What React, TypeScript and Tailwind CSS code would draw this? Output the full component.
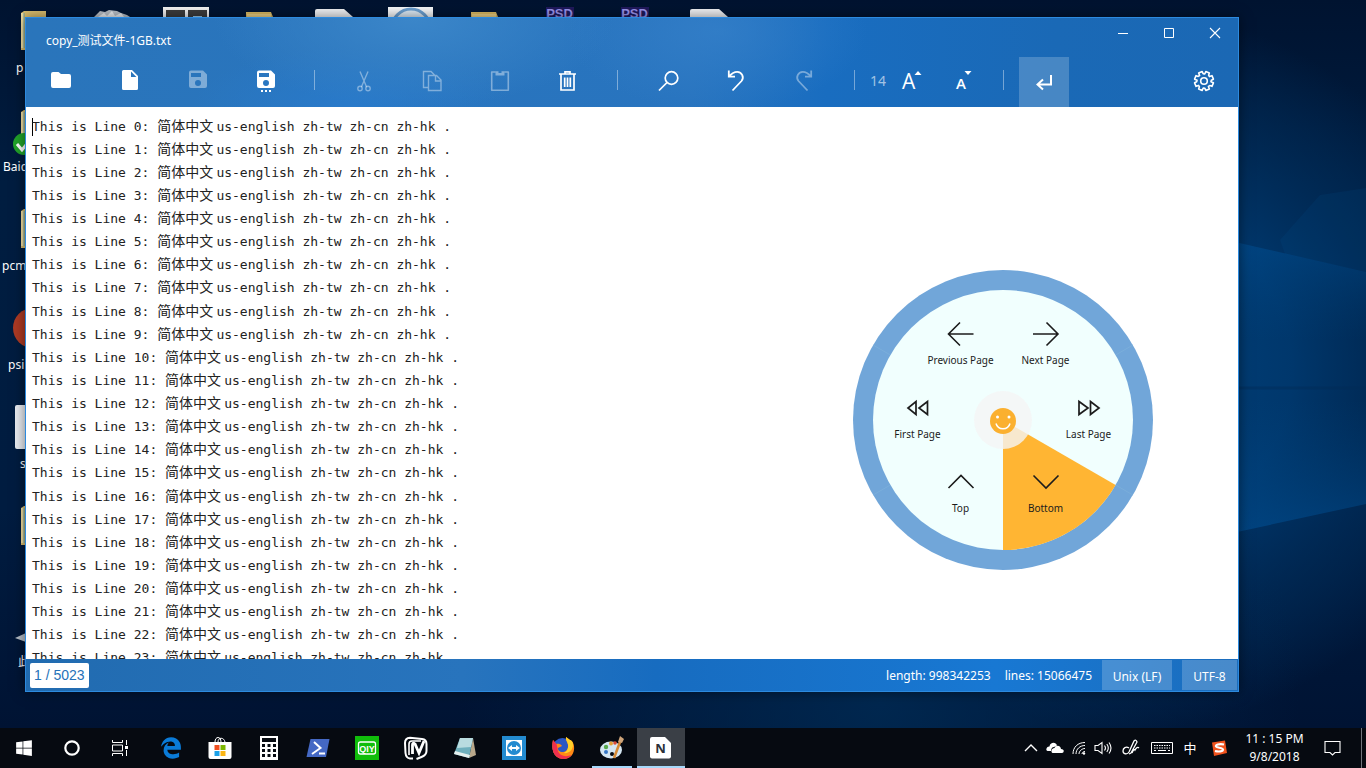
import React from "react";
import { FaWindows } from "react-icons/fa";
import { FaEdgeLegacy } from "react-icons/fa6";

type IconProps = { children: React.ReactNode; size?: string; box?: string };

function Glyph({ children, size = "size-6", box = "0 0 24 24" }: IconProps) {
  return (
    <svg className={`overflow-visible ${size}`} viewBox={box} fill="none" stroke="currentColor" strokeWidth="1.4" aria-hidden="true">
      {children}
    </svg>
  );
}

const GEAR_PATH = (() => {
  const points: string[] = [];
  const teeth = 8;
  for (let i = 0; i < teeth; i++) {
    const steps: [number, number][] = [
      [-0.2, 9.6],
      [0.2, 9.6],
      [0.28, 7.4],
      [0.5, 7],
    ];
    for (const [offset, radius] of steps) {
      const angle = (i * Math.PI * 2) / teeth - Math.PI / 2 + Math.PI / 8 + offset;
      points.push(`${(12 + Math.cos(angle) * radius).toFixed(2)} ${(11 + Math.sin(angle) * radius).toFixed(2)}`);
    }
  }
  return `M${points.join("L")}Z`;
})();

function ToolButton({ label, disabled, active, children }: { label: string; disabled?: boolean; active?: boolean; children: React.ReactNode }) {
  const state = active ? "bg-white/20 text-white" : disabled ? "text-white/40" : "text-white";
  return (
    <button type="button" aria-label={label} disabled={disabled} className={`flex h-[50px] w-[50px] shrink-0 items-center justify-center ${state}`}>
      {children}
    </button>
  );
}

function Divider({ space }: { space: string }) {
  return <span className={`mb-1 h-5 w-px shrink-0 bg-white/40 ${space}`} />;
}

function SaveShape() {
  return (
    <path
      fill="currentColor"
      stroke="none"
      fillRule="evenodd"
      d="M6 0.5h12l4 4V16a2 2 0 0 1-2 2H6a2 2 0 0 1-2-2V2.500a2 2 0 0 1 2-2ZM6 3v4h10V3ZM13 10a3 3 0 1 0 0 6 3 3 0 0 0 0-6Z"
    />
  );
}

function Toolbar() {
  return (
    <div className="flex h-[50px] items-center pl-[10px] pr-[9px]">
      <div className="flex gap-[18px]">
        <ToolButton label="Open">
          <Glyph><path fill="currentColor" stroke="none" d="M4 2h5.500l2.500 2h8a2 2 0 0 1 2 2v10a2 2 0 0 1-2 2H4a2 2 0 0 1-2-2V4a2 2 0 0 1 2-2Z" /></Glyph>
        </ToolButton>
        <ToolButton label="New">
          <Glyph><path fill="currentColor" stroke="none" fillRule="evenodd" d="M6.500 0H15l6 6v12.500a1.500 1.500 0 0 1-1.500 1.500h-13A1.500 1.500 0 0 1 5 18.500v-17A1.500 1.500 0 0 1 6.500 0ZM14 1.600V7h5.400Z" /></Glyph>
        </ToolButton>
        <ToolButton label="Save" disabled><Glyph><SaveShape /></Glyph></ToolButton>
        <ToolButton label="Save as">
          <Glyph>
            <SaveShape />
            <path fill="currentColor" stroke="none" d="M8 20h2v2H8ZM12 20h2v2h-2ZM16 20h2v2h-2Z" />
          </Glyph>
        </ToolButton>
      </div>
      <Divider space="mx-6" />
      <div className="flex gap-[18px]">
        <ToolButton label="Cut" disabled>
          <Glyph>
            <path d="M8 1.500 14.600 17M16 1.500 9.400 17" />
            <circle cx="8" cy="18.500" r="2.200" />
            <circle cx="16" cy="18.500" r="2.200" />
          </Glyph>
        </ToolButton>
        <ToolButton label="Copy" disabled>
          <Glyph>
            <path d="M8.500 17.500H3.500V1.500H11L14.500 5M8.500 5.500h8l4.500 4.500V20.500H8.500ZM15.500 5.700V11H21" />
          </Glyph>
        </ToolButton>
        <ToolButton label="Paste" disabled>
          <Glyph>
            <path strokeWidth="1.600" strokeLinejoin="round" d="M7.500 2H3.700V20.300H20.300V2H16.500" />
            <path fill="currentColor" stroke="none" d="M7.500 1.300H10.500V3h3V1.300h3V5.500h-9Z" />
          </Glyph>
        </ToolButton>
        <ToolButton label="Delete">
          <Glyph>
            <path strokeWidth="1.700" d="M3 4H20M5 4V20H18V4M9 3.500V1.800h5V3.500M8.700 7.500v9.500M11.500 7.500v9.500M14.300 7.500v9.500" />
          </Glyph>
        </ToolButton>
      </div>
      <Divider space="ml-6 mr-[25px]" />
      <div className="flex gap-[18px]">
        <ToolButton label="Find">
          <Glyph><g strokeWidth="1.700"><circle cx="15.500" cy="8" r="6.300" /><path d="M11 12.500 3 20.500" /></g></Glyph>
        </ToolButton>
        <ToolButton label="Undo">
          <Glyph><path strokeWidth="1.800" d="M4.800 0.500V6.700H11M5 6.500C8 3 10 1.800 13.200 1.800C18 1.800 20.500 7.500 17.500 11L8.500 20.500" /></Glyph>
        </ToolButton>
        <ToolButton label="Redo" disabled>
          <Glyph><path strokeWidth="1.800" d="M19.200 0.500V6.700H13M19 6.500C16 3 14 1.800 10.800 1.800C6 1.800 3.500 7.500 6.500 11L15.500 20.500" /></Glyph>
        </ToolButton>
      </div>
      <Divider space="ml-[25px] mr-[15px]" />
      <span className="mb-[3px] w-[18px] text-[14px] leading-5 text-white/60">14</span>
      <ToolButton label="Increase font size">
        <Glyph>
          <text x="1" y="19" fontSize="21" fontFamily="Open Sans, sans-serif" fill="currentColor" stroke="none">A</text>
          <path fill="currentColor" stroke="none" d="M13.500 5 17 1l3.500 4Z" />
        </Glyph>
      </ToolButton>
      <ToolButton label="Decrease font size">
        <Glyph>
          <text x="5" y="19" fontSize="15" fontFamily="Open Sans, sans-serif" fontWeight="600" fill="currentColor" stroke="none">A</text>
          <path fill="currentColor" stroke="none" d="M13.500 1 17 5l3.500-4Z" />
        </Glyph>
      </ToolButton>
      <Divider space="mx-[15px]" />
      <ToolButton label="Word wrap" active>
        <Glyph><path strokeWidth="2" d="M19 5V14.500H6M11 9.500 5.500 14.500 11 19.500" /></Glyph>
      </ToolButton>
      <div className="ml-auto">
        <ToolButton label="Settings">
          <Glyph><g strokeWidth="1.600"><path strokeLinejoin="round" d={GEAR_PATH} /><circle cx="12" cy="11" r="3.300" /></g></Glyph>
        </ToolButton>
      </div>
    </div>
  );
}

function TitleBar() {
  return (
    <div className="flex h-[39px] justify-between">
      <h1 className="self-end pl-5 text-[12px] leading-8 text-white">copy_测试文件-1GB.txt</h1>
      <div className="flex text-white">
        <button type="button" aria-label="Minimize" className="flex h-[30px] w-[46px] items-center justify-center">
          <Glyph size="size-3" box="0 0 12 12"><path strokeWidth="1" d="M1 6.500H11" /></Glyph>
        </button>
        <button type="button" aria-label="Maximize" className="flex h-[30px] w-[46px] items-center justify-center">
          <Glyph size="size-3" box="0 0 12 12"><path strokeWidth="1" d="M1.500 1.500h9v9h-9Z" /></Glyph>
        </button>
        <button type="button" aria-label="Close" className="flex h-[30px] w-[46px] items-center justify-center">
          <Glyph size="size-3" box="0 0 12 12"><path strokeWidth="1.100" d="m1 1 10 10M11 1 1 11" /></Glyph>
        </button>
      </div>
    </div>
  );
}

function WheelItem({ label, children }: { label: string; children: React.ReactNode }) {
  return (
    <button type="button" className="flex h-12 w-[85px] flex-col items-center gap-1 text-[10px] leading-4 whitespace-nowrap text-[#1c1c1c]">
      <Glyph size="size-7" box="0 0 28 28">{children}</Glyph>
      {label}
    </button>
  );
}

function Wheel() {
  return (
    <nav aria-label="Page navigation" className="absolute top-[163px] right-[85px] size-[300px]">
      <svg className="absolute inset-0 size-full" viewBox="0 0 300 300" aria-hidden="true">
        <circle cx="150" cy="150" r="150" fill="#71a6d9" />
        <path d="M20.100 75 37.400 85M279.900 75 262.600 85M20.100 225 37.400 215M279.900 225 262.600 215" stroke="#7aaedb" strokeWidth="1" />
        <circle cx="150" cy="150" r="130" fill="#f1fffe" />
        <path d="M150 150 262.600 215A130 130 0 0 1 150 280Z" fill="#ffb533" />
        <circle cx="150" cy="150" r="29" fill="#f5f5f5" fillOpacity="0.800" />
        <circle cx="150" cy="151" r="13" fill="#fbb02f" />
        <circle cx="144.500" cy="147" r="1.500" fill="#fff" />
        <circle cx="156" cy="147" r="1.500" fill="#fff" />
        <path d="M143 153.500c2 7 12 7 14 0" fill="none" stroke="#fff" strokeWidth="1.500" />
      </svg>
      <div className="relative flex flex-col gap-[26px] pt-[50px]">
        <div className="flex justify-center">
          <WheelItem label="Previous Page"><path strokeWidth="1.600" d="M26.500 14H1.500M13 2.500 1.500 14 13 25.500" /></WheelItem>
          <WheelItem label="Next Page"><path strokeWidth="1.600" d="M1 14H26M14.500 2.500 26 14 14.500 25.500" /></WheelItem>
        </div>
        <div className="flex justify-between px-[22px]">
          <WheelItem label="First Page"><path strokeWidth="1.700" d="M12 7.500V20.500L4 14ZM23.500 7.500V20.500L15 14Z" /></WheelItem>
          <WheelItem label="Last Page"><path strokeWidth="1.700" d="M15.500 7.500V20.500L24 14ZM4 7.500V20.500L13 14Z" /></WheelItem>
        </div>
        <div className="flex justify-center">
          <WheelItem label="Top"><path strokeWidth="1.600" d="M1.500 20 14 7.500 26.500 20" /></WheelItem>
          <WheelItem label="Bottom"><path strokeWidth="1.600" d="M1.500 7.500 14 20 26.500 7.500" /></WheelItem>
        </div>
      </div>
    </nav>
  );
}

const LINES = Array.from({ length: 24 }, (_, i) => i);

function EditorWindow() {
  return (
    <section className="absolute top-[17px] right-[127px] bottom-[36px] left-[25px] flex flex-col border border-[#2d8ade] bg-[#2672bb] shadow-[0_0_12px_rgba(0,0,0,0.5)]">
      <header className="bg-[radial-gradient(ellipse_200px_90px_at_32%_0%,#3b86c9,transparent),radial-gradient(ellipse_150px_80px_at_57%_15%,rgba(54,129,202,0.7),transparent),radial-gradient(ellipse_160px_60px_at_27%_100%,#297aca,transparent),linear-gradient(90deg,#2a75bb_0%,#2874bf_55%,#196dc0_66%,#1a69b6_85%,#1b68b4_100%)]">
        <TitleBar />
        <Toolbar />
      </header>
      <main className="relative flex min-h-0 flex-1 overflow-hidden bg-white">
        <ol className="-mb-[11px] grid flex-1 auto-rows-fr pt-2 pl-[6px] font-['DejaVu_Sans_Mono','Noto_Sans_CJK_SC',monospace] text-[13px] text-[#222]">
          {LINES.map((n) => (
            <li key={n} className="flex min-h-0 items-center whitespace-pre">
              {n === 0 && <span className="-mr-px h-[18px] w-px bg-black" />}
              <span className="leading-[22px]">
                {`This is Line ${n}: `}
                <span className="font-['Noto_Sans_CJK_SC',sans-serif] text-[14px] leading-none">简体中文 </span>
                us-english zh-tw zh-cn zh-hk .
              </span>
            </li>
          ))}
        </ol>
        <Wheel />
      </main>
      <footer className="flex h-8 items-center bg-[linear-gradient(90deg,#216bb0_0%,#2874bd_36%,#176cc0_52%,#1878d3_80%,#1b6dbd_100%)] text-[12px] text-white">
        <button type="button" className="ml-1 h-[25px] rounded-xs bg-white px-1 font-['Liberation_Sans',sans-serif] text-[14px] leading-[25px] text-[#2672b8]">1 / 5023</button>
        <div className="ml-auto flex items-center leading-[30px]">
          <span className="mr-[14px] pt-[2px]">length: 998342253</span>
          <span className="mr-[10px] pt-[2px]">lines: 15066475</span>
          <button type="button" className="mr-[10px] h-[30px] w-[70px] bg-white/20 pt-[2px]">Unix (LF)</button>
          <button type="button" className="mr-px h-[30px] w-[55px] bg-white/20 pt-[2px]">UTF-8</button>
        </div>
      </footer>
    </section>
  );
}

function FolderArt() {
  return (
    <>
      <path d="M21 3 24 1H46V40H21Z" fill="#d9bd6d" />
      <path d="M21 3h3v35h-3Z" fill="#f3df9d" />
      <path d="M24 3v35" stroke="#6f9fa0" />
    </>
  );
}

const COLUMN: { label: string; art: React.ReactNode }[] = [
  { label: "p", art: <FolderArt /> },
  { label: "Baid", art: <><FolderArt /><circle cx="24" cy="35" r="11" fill="#21a329" /><path d="m17 35 5 6 8-10" stroke="#fff" strokeWidth="3" fill="none" /></> },
  { label: "pcm", art: <FolderArt /> },
  { label: "psi", art: <circle cx="33" cy="21" r="20" fill="#ad3a24" /> },
  { label: "s", art: <rect x="15" y="-1" width="30" height="44" rx="2" fill="#e9ecf1" /> },
  { label: "", art: <FolderArt /> },
  { label: "此", art: <path d="M15 34 26 29v9Z" fill="#b4bdc6" /> },
];

const LABEL_INDENT = ["pl-4", "pl-[3px]", "pl-[2px]", "pl-2", "pl-5", "pl-4", "pl-[18px]"];

function PsdTile() {
  return <span className="mt-[7px] w-7 bg-[#20195c] text-center font-['Liberation_Sans',sans-serif] text-[13px] leading-[14px] font-bold text-[#9a93ea]">PSD</span>;
}

function Cap({ children }: { children: React.ReactNode }) {
  return <svg className="h-[17px] w-12" viewBox="0 0 48 17" aria-hidden="true">{children}</svg>;
}

const capFolder = <Cap><path d="M10 12h25l2 5H10Z" fill="#d9b860" /><path d="M11 14h24v3H11Z" fill="#ecd083" /></Cap>;
const capDoc = <Cap><path d="M4 17V11q0-2 2-2H33l9 8Z" fill="#eef0f3" /></Cap>;

function DesktopIcons() {
  return (
    <div className="absolute inset-0 overflow-hidden text-[12px] text-white">
      <ul className="absolute top-[10px] left-0 w-12">
        {COLUMN.map((item, i) => (
          <li key={i} className="h-[99px]">
            <svg className="h-[50px] w-12 overflow-visible" viewBox="0 0 48 50" aria-hidden="true">{item.art}</svg>
            <span className={`block leading-4 ${LABEL_INDENT[i]}`}>{item.label}</span>
          </li>
        ))}
      </ul>
      <ul className="absolute top-0 left-[72px] flex h-[17px]">
        {[
          <Cap><path d="m8 17 6-6 5 1 4-2 8 1 4 2 6 2 3 2Z" fill="#b9bfc6" /><path d="m12 17 6-4 3 3 5-5 3 5 6-3 3 4Z" fill="#eceff2" /></Cap>,
          <Cap><path d="M2 7h48v10H2Z" fill="#f1f1f1" /><path d="M5 10h19v7H5ZM27 10h19v7H27Z" fill="#3c3c3c" /><path d="M32 16h9v1h-9Z" fill="#9ecbe8" /></Cap>,
          capFolder,
          capDoc,
          <Cap><path d="M2 7h45v10H2Z" fill="#f4f6f8" /><circle cx="25" cy="28" r="19" fill="#dce9f4" stroke="#6b9fd0" strokeWidth="3" /></Cap>,
          capFolder,
          <PsdTile />,
          <PsdTile />,
          capDoc,
        ].map((art, i) => (
          <li key={i} className="flex w-[75px] items-start justify-center">{art}</li>
        ))}
      </ul>
    </div>
  );
}

function TaskButton({ label, children, className = "" }: { label: string; children: React.ReactNode; className?: string }) {
  return <button type="button" aria-label={label} className={`flex h-10 w-12 shrink-0 items-center justify-center ${className}`}>{children}</button>;
}

function AppArt({ children }: { children: React.ReactNode }) {
  return <svg className="size-6" viewBox="0 0 24 24" fill="none" aria-hidden="true">{children}</svg>;
}

function Taskbar() {
  return (
    <footer className="flex h-10 shrink-0 bg-[#060a11] text-[12px] text-white">
      <TaskButton label="Start"><FaWindows className="size-[18px]" /></TaskButton>
      <TaskButton label="Search"><AppArt><circle cx="12" cy="12" r="6.700" stroke="#fff" strokeWidth="2.200" /></AppArt></TaskButton>
      <TaskButton label="Task view">
        <AppArt><path d="M4.500 4v2.500h10V4M4.500 20v-2.500h10V20M4.500 9h10v6h-10ZM18.500 4v5M18.500 14v6" stroke="#fff" /><path d="M17 10h3v3h-3Z" fill="#fff" /></AppArt>
      </TaskButton>
      <div className="ml-[3px] flex gap-px">
        <TaskButton label="Microsoft Edge"><FaEdgeLegacy className="size-[22px] text-[#0a7bd8]" /></TaskButton>
        <TaskButton label="Store">
          <AppArt>
            <path d="M7 6c0-6 6-6 6 0M10 6c0-5 6-5 7 0" stroke="#fff" />
            <path d="M.5 6h23v15q0 2-2 2h-19q-2 0-2-2Z" fill="#fff" />
            <path d="M6.500 9h5v5h-5Z" fill="#f04e1f" /><path d="M12.500 9h5v5h-5Z" fill="#7db700" /><path d="M6.500 15h5v5h-5Z" fill="#1ca1e8" /><path d="M12.500 15h5v5h-5Z" fill="#fcb614" />
          </AppArt>
        </TaskButton>
        <TaskButton label="Calculator">
          <AppArt>
            <path d="M3 0h18v24H3Z" fill="#fff" />
            <path d="M5 2h14v4H5Z" fill="#060a11" />
            <path d="M5 9.500h14M5 14.500h14M5 19.500h14" stroke="#060a11" strokeWidth="3" strokeDasharray="3 2.500" />
          </AppArt>
        </TaskButton>
        <TaskButton label="PowerShell">
          <AppArt><path d="M4.500 3h19L20 21H.5Z" fill="#4468c4" /><path d="m8 6 6.500 6L6 18M13 17.500h6" stroke="#fff" strokeWidth="2" /></AppArt>
        </TaskButton>
        <TaskButton label="iQIYI">
          <AppArt>
            <path d="M0 0h24v24H0Z" fill="#10bd0b" />
            <rect x="3.500" y="6" width="17" height="12" rx="2" stroke="#fff" strokeWidth="1.300" />
            <text x="12" y="15.500" fontSize="9" fontWeight="700" textAnchor="middle" fontFamily="Liberation Sans, sans-serif" fill="#fff">QIY</text>
          </AppArt>
        </TaskButton>
        <TaskButton label="MTV">
          <AppArt>
            <path d="M9 22.500H6Q2 22 1.500 17L1 7Q1 2 6 1.700L18 3q4.500.5 4.500 5v7q0 4-5 6l-5 2" stroke="#fff" strokeWidth="2" />
            <path d="M8.500 18V9q0-3 2.500-1l4 9 5-12" stroke="#fff" strokeWidth="2.800" /><path d="M5 19V8q0-3 3-3h9" stroke="#fff" strokeWidth="1.600" />
          </AppArt>
        </TaskButton>
        <TaskButton label="Notepad">
          <AppArt><path d="m20 2 3 17-7 3Z" fill="#b8a78a" /><path d="M7 2h13l-4 20L1 18Z" fill="#6fb0bd" /><path d="M7 2h13l-2 9L4 12Z" fill="#b9dce0" /><path d="m1 18 15 4 1-3L2 15Z" fill="#e6f0ee" /></AppArt>
        </TaskButton>
        <TaskButton label="TeamViewer">
          <AppArt><path d="M0 0h24v24H0Z" fill="#238bd0" /><path d="M4 4h16v16H4Z" fill="#fff" /><circle cx="12" cy="12" r="7" fill="#238bd0" /><path d="M6 12l4-3v2h4V9l4 3-4 3v-2h-4v2Z" fill="#fff" /></AppArt>
        </TaskButton>
        <TaskButton label="Firefox">
          <AppArt>
            <circle cx="11.500" cy="12" r="10" fill="#2a57c5" />
            <path d="M2 4c-2 8 0 18 9.500 19C19 23.500 24 18 23 10c-.5-4-3-6-4-6L15 1c-.5 3 1 4 1.500 6 2 5-1 9-4.500 9-4 0-5-2-5-4l4-2C9 7 6 8 5 8Z" fill="#ff8a16" />
            <path d="M2 4c-2 8 0 18 9.500 19 4 .2 7-1 9-4-7 3-14 0-14-7l-1-4Z" fill="#ef2f4e" />
            <path d="M15 1c-.5 3 1 4 1.500 6 2 5-1 9-4 10 6 1 10-4 9.500-9-.5-3-2-4-3-4Z" fill="#ffd02a" />
          </AppArt>
        </TaskButton>
        <TaskButton label="Paint" className="relative">
          <AppArt>
            <ellipse cx="11" cy="14" rx="11" ry="8.500" fill="#d5e7f2" />
            <circle cx="6" cy="11" r="2.200" fill="#58a94d" /><circle cx="11" cy="7.500" r="2" fill="#e2a136" /><circle cx="15" cy="7" r="1.800" fill="#d94b36" />
            <circle cx="6" cy="16" r="2" fill="#3776c5" /><circle cx="12" cy="18" r="2" fill="#060a11" />
            <path d="M14 22 20 6" stroke="#d68a35" strokeWidth="2.500" /><path d="m18 6 2-6 4 3-2 4Z" fill="#cfa57a" />
          </AppArt>
          <span className="absolute bottom-0 left-1 h-[2px] w-10 bg-[#a6d8fa]" />
        </TaskButton>
        <TaskButton label="Notepads" className="relative bg-[#3a3f46]">
          <AppArt>
            <path d="M3 1h13l6 6v13.500q0 2-2 2H3q-2 0-2-2V3q0-2 2-2Z" fill="#fff" />
            <text x="11.500" y="17" fontSize="13" fontWeight="700" textAnchor="middle" fontFamily="Open Sans, sans-serif" fill="#2b3038">N</text>
          </AppArt>
          <span className="absolute bottom-0 left-0 h-[2px] w-full bg-[#a6d8fa]" />
        </TaskButton>
      </div>
      <div className="ml-auto flex items-center">
        <button type="button" aria-label="Show hidden icons" className="w-5"><Glyph size="mx-auto size-5" box="0 0 20 20"><path d="m4 13 6-6 6 6" /></Glyph></button>
        <button type="button" aria-label="OneDrive" className="w-7"><Glyph size="mx-auto size-5" box="0 0 20 20"><path fill="currentColor" stroke="none" d="M2.500 13C0 12 2 8 4.500 8.500 5 4 11 3.500 12 7.500L9 9c-2 0-3 2-3 4ZM7.500 15c-2-1-1-5 2-5 1-3 6-3 6.500 1 4 0 3 4 1 4Z" /></Glyph></button>
        <button type="button" aria-label="Network" className="w-5"><Glyph size="mx-auto size-5" box="0 0 20 20"><g strokeWidth="1"><path d="M4 16C4 9 9 4.500 16 4.500M7 16C7 11 11 7.500 16 7.500M10 16c0-3 3-5.500 6-5.500M13 16c0-1.500 1.500-2.500 3-2.500" /></g><circle cx="15" cy="15.500" r="1.200" fill="currentColor" stroke="none" /></Glyph></button>
        <button type="button" aria-label="Volume" className="w-7"><Glyph size="mx-auto size-5" box="0 0 20 20"><path strokeWidth="1.100" d="M2 7.500h3l4-3v11l-4-3H2ZM11.500 7.500q2 2.500 0 5M13.800 6q3 4 0 8M16 4.500q4 5.500 0 11" /></Glyph></button>
        <button type="button" aria-label="Ink workspace" className="w-7"><Glyph size="mx-auto size-5" box="0 0 20 20"><path strokeWidth="1.300" d="M8 10c-3-2-6 0-6 3s4 4 6 1l5-11q2-2 3 1l-6 11-2 1M11 15c2-5 3-3 3-3s2-4 4-2" /></Glyph></button>
        <button type="button" aria-label="Touch keyboard" className="w-[34px]">
          <svg className="mx-auto h-4 w-6" viewBox="0 0 24 16" fill="none" stroke="#fff" aria-hidden="true"><path d="M1.500 2.500h21v11h-21Z" /><path d="M4 5.500h16M4 8h16" strokeDasharray="1.500 1" /><path d="M4 10.500h2M8 10.500h8M18 10.500h2" /></svg>
        </button>
        <button type="button" className="w-[22px] font-['Noto_Sans_CJK_SC',sans-serif] text-[13px]">中</button>
        <button type="button" aria-label="Sogou input" className="w-9">
          <svg className="mx-auto size-4" viewBox="0 0 16 16" fill="none" aria-hidden="true"><path d="m1 2.500 13-2L16 13l-13 3Z" fill="#f0521d" /><path d="M13 4.500C8 3.500 4 5 5 6.500s7 1 7 3-4 2.500-8 1.500" stroke="#fff" strokeWidth="2.200" /></svg>
        </button>
        <time className="w-[75px] text-center text-[12px] leading-[18px]">11 : 15 PM<br />9/8/2018</time>
        <button type="button" aria-label="Notifications" className="mr-[9px] w-10"><Glyph size="mx-auto size-5" box="0 0 20 20"><path strokeWidth="1.100" d="M3 3.500h15v11h-5L10.500 17 8 14.500H3Z" /></Glyph></button>
        <span className="h-10 w-[5px] border-l border-[#70757c]" />
      </div>
    </footer>
  );
}

function Wallpaper() {
  return (
    <svg className="absolute inset-0 size-full" viewBox="0 0 1366 728" preserveAspectRatio="none" aria-hidden="true">
      <defs>
        <linearGradient id="base" x1="0" y1="0" x2="0" y2="1">
          <stop offset="0" stopColor="#001330" /><stop offset="0.250" stopColor="#001d40" /><stop offset="0.700" stopColor="#001c40" /><stop offset="1" stopColor="#001333" />
        </linearGradient>
        <radialGradient id="glow" gradientUnits="userSpaceOnUse" cx="1130" cy="370" r="360">
          <stop offset="0" stopColor="#00447f" /><stop offset="0.450" stopColor="#003c74" stopOpacity="0.850" /><stop offset="0.800" stopColor="#00305f" stopOpacity="0.450" /><stop offset="1" stopColor="#003060" stopOpacity="0" />
        </radialGradient>
        <radialGradient id="floor" gradientUnits="userSpaceOnUse" cx="880" cy="700" r="420">
          <stop offset="0" stopColor="#002c56" stopOpacity="0.800" /><stop offset="1" stopColor="#002c56" stopOpacity="0" />
        </radialGradient>
        <linearGradient id="upper" x1="0" y1="0" x2="0" y2="1">
          <stop offset="0" stopColor="#0059a4" stopOpacity="0.450" /><stop offset="1" stopColor="#004a88" stopOpacity="0" />
        </linearGradient>
        <linearGradient id="lower" x1="0" y1="0" x2="0" y2="1">
          <stop offset="0" stopColor="#004a88" stopOpacity="0" /><stop offset="1" stopColor="#0059a4" stopOpacity="0.500" />
        </linearGradient>
      </defs>
      <rect width="1366" height="728" fill="url(#base)" />
      <rect width="1366" height="728" fill="url(#glow)" />
      <rect width="1366" height="728" fill="url(#floor)" />
      <path d="M1200 234 1366 272V340H1200Z" fill="url(#upper)" />
      <path d="M1200 400H1366V504L1200 540Z" fill="url(#lower)" />
      <path d="M1280 240 1320 195 1366 188V272L1285 254Z" fill="#005aa0" fillOpacity="0.120" />
      <path d="M1238 388H1366" stroke="#002a55" strokeWidth="3" strokeOpacity="0.400" />
    </svg>
  );
}

export default function App() {
  return (
    <div className="flex h-screen flex-col overflow-hidden font-['Noto_Sans','Noto_Sans_CJK_SC',sans-serif]">
      <div className="relative min-h-0 flex-1 bg-[#001635]">
        <Wallpaper />
        <DesktopIcons />
        <EditorWindow />
      </div>
      <Taskbar />
    </div>
  );
}
